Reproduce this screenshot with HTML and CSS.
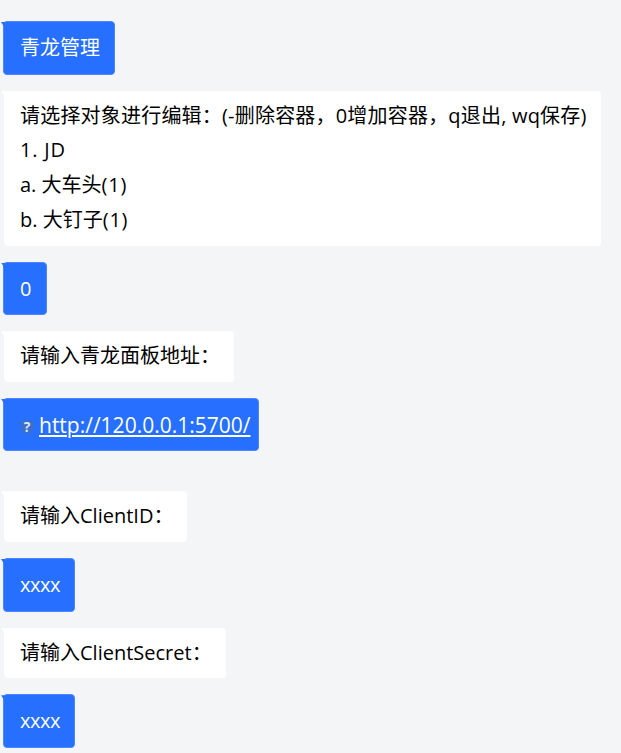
FILE: index.html
```html
<!DOCTYPE html>
<html lang="en">
<head>
    <meta charset="UTF-8">
    <meta name="viewport" content="width=device-width, initial-scale=1.0">
    <title>青龙管理</title>
    <link rel="stylesheet" href="styles.css">
</head>
<body>

    <!-- Chat log -->
    <div class="chat-log">
        <div class="bubble bubble-user">青龙管理</div>

        <div class="bubble bubble-bot">
            <p class="menu-title">请选择对象进行编辑：(-删除容器，0增加容器，q退出, wq保存)</p>
            <p class="menu-group">1. JD</p>
            <p>a. 大车头<span class="menu-count">(1)</span></p>
            <p>b. 大钉子<span class="menu-count">(1)</span></p>
        </div>

        <div class="bubble bubble-user bubble-digit">0</div>

        <div class="bubble bubble-bot">请输入青龙面板地址：</div>

        <div class="bubble bubble-user bubble-link">
            <svg class="link-icon" viewBox="0 0 14 16" aria-hidden="true">
                <path class="link-shield" d="M7 0.5 L13.5 2.5 V8 C13.5 11.5 10.5 14 7 15.5 C3.5 14 0.5 11.5 0.5 8 V2.5 Z"/>
                <text class="link-mark" x="7" y="12.5" text-anchor="middle">?</text>
            </svg>
            <a href="#">http://120.0.0.1:5700/</a>
        </div>

        <div class="bubble bubble-bot">请输入ClientID：</div>

        <div class="bubble bubble-user bubble-short">xxxx</div>

        <div class="bubble bubble-bot">请输入ClientSecret：</div>

        <div class="bubble bubble-user bubble-short">xxxx</div>
    </div>

</body>
</html>
```

FILE: styles.css
```css
/* Page */
body {
    margin: 0;
    background-color: #f4f5f7;
    font-family: "Open Sans", "Noto Sans CJK SC", sans-serif;
    font-size: 20px;
    line-height: 34.75px;
    color: #000;
}

.chat-log {
    display: flex;
    flex-direction: column;
    align-items: flex-start;
    gap: 16px;
    padding: 21px 0 6px 3px;
}

/* Bubbles */
.bubble {
    position: relative;
    padding: 8px 14px 8px 16px;
    border-radius: 4px;
}

.bubble::before {
    content: "";
    position: absolute;
    top: 0;
    left: -3px;
    width: 4px;
    height: 6px;
    clip-path: polygon(0 0, 100% 0, 100% 100%);
}

.bubble p {
    margin: 0;
}

.bubble-user {
    padding-top: 9px;
    padding-bottom: 7.75px;
    background-color: #266fff;
    border: 1px solid #4a87ff;
    color: #fff;
}

.bubble-user::before {
    background-color: #266fff;
}

.bubble-bot {
    margin-left: 1px;
    background-color: #fff;
}

.bubble-bot::before {
    background-color: #fff;
}

.bubble-digit {
    padding-right: 15px;
}

.bubble-short {
    letter-spacing: -0.5px;
}

/* Menu message */
.menu-title {
    letter-spacing: 0.2px;
}

.menu-group {
    letter-spacing: 0.8px;
}

.menu-count {
    letter-spacing: 0.8px;
}

/* Link message */
.bubble-link {
    display: flex;
    align-items: center;
    gap: 5px;
    margin-bottom: 24px;
    padding-right: 8px;
}

.bubble-link a {
    color: #fff;
    font-size: 21px;
}

.link-icon {
    width: 14px;
    height: 16px;
    margin-top: 3px;
    overflow: visible;
}

.link-shield {
    fill: #3b6fcb;
}

.link-mark {
    fill: #dfe7f5;
    font-family: "Open Sans", sans-serif;
    font-size: 14px;
    font-weight: 700;
}
```
